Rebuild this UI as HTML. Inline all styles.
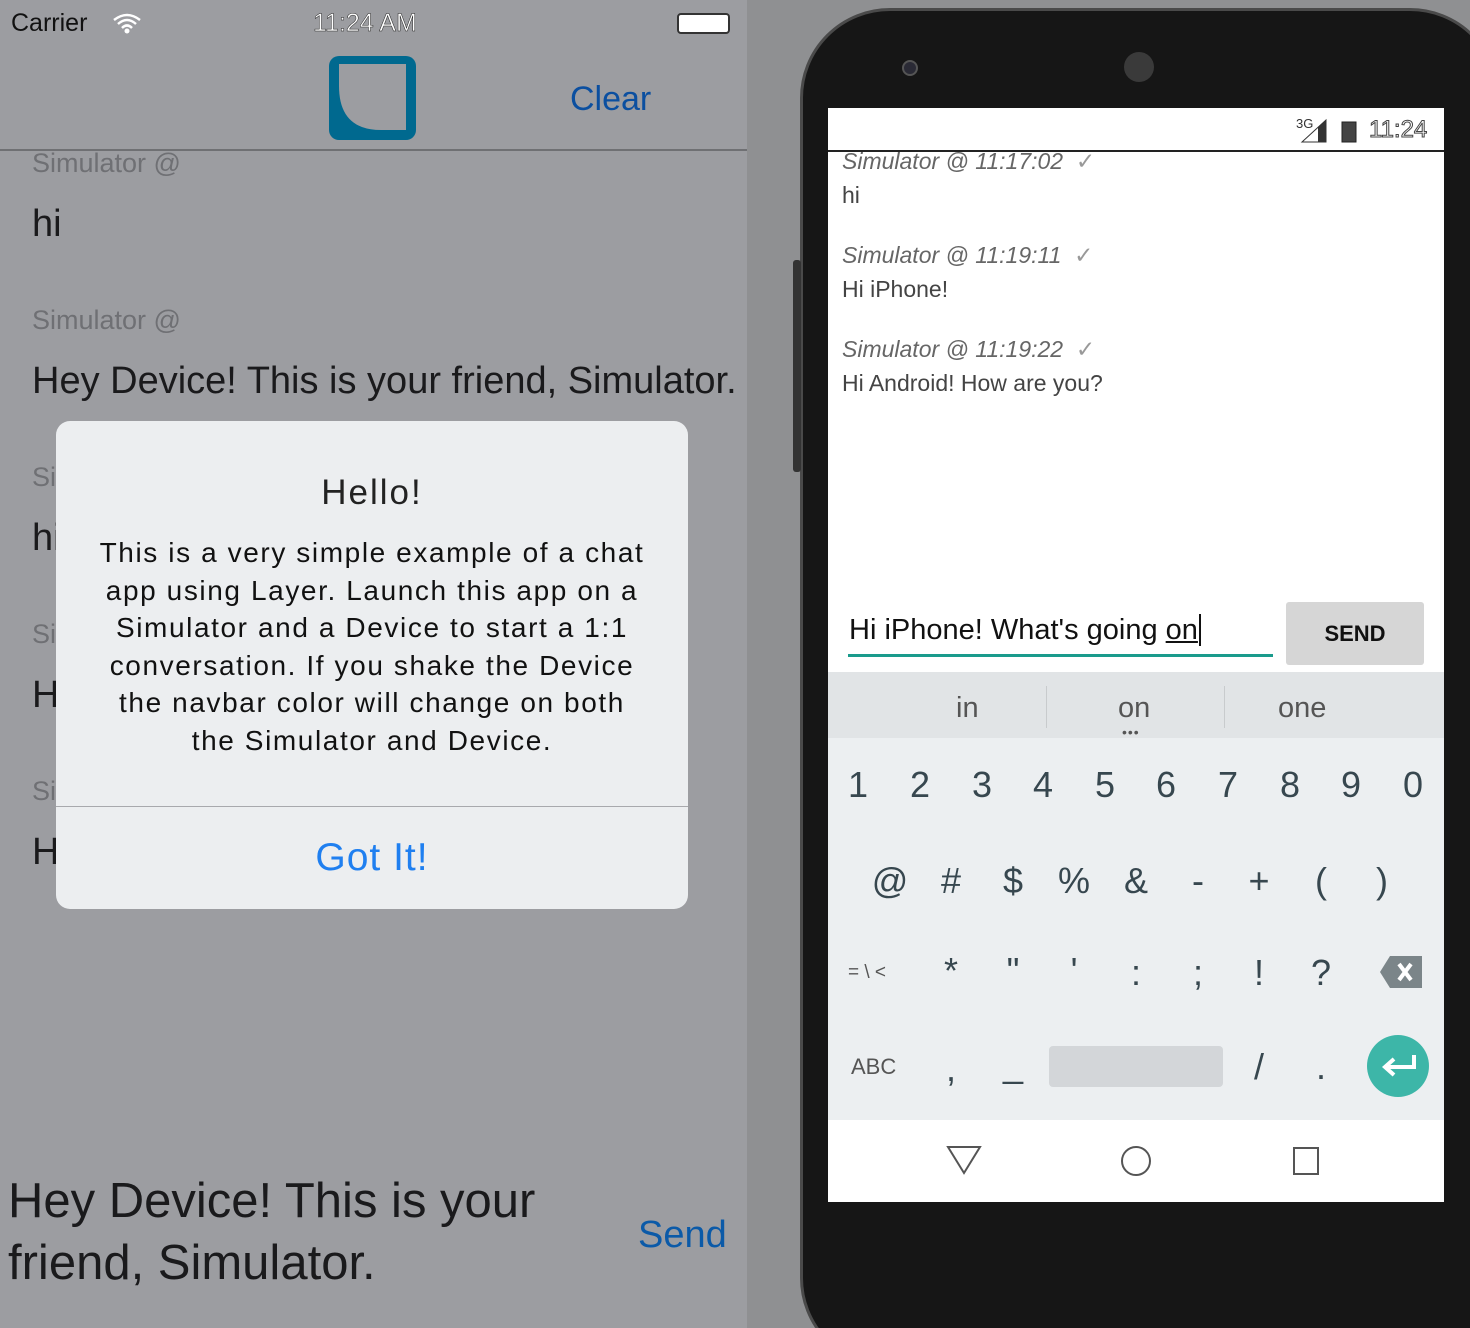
<!DOCTYPE html>
<html style="overflow:hidden;width:1470px;height:1328px"><head><meta charset="utf-8"><style>
*{margin:0;padding:0;box-sizing:border-box}
body{width:1470px;height:1328px;overflow:hidden;background:#8f9092;font-family:"Liberation Sans",sans-serif;position:relative}
.a{position:absolute;white-space:nowrap}
#left{position:absolute;left:0;top:0;width:747px;height:1328px;background:#9c9da1;overflow:hidden}
.g{color:#6f7074;font-size:27px}
.m{color:#1a1a1c;font-size:38px}
#dlg{position:absolute;left:56px;top:421px;width:632px;height:488px;background:#eceef0;border-radius:14px}
#phone{position:absolute;left:800px;top:8px;width:700px;height:1360px;background:#161616;border-radius:90px;border:3px solid #4a4a4a}
#scr{position:absolute;left:828px;top:108px;width:616px;height:1094px;background:#fff;overflow:hidden}
.k{position:absolute;font-size:36px;color:#37474f;text-align:center;width:60px}
</style></head><body>
<div id="left">
 <div class="a" style="left:11px;top:9px;font-size:25px;color:#111">Carrier</div>
 <svg class="a" style="left:112px;top:12px" width="30" height="22"><path d="M2 8 Q15 -2 28 8 M6 12 Q15 4 24 12 M10 16 Q15 11 20 16" stroke="#fff" stroke-width="2.5" fill="none"/><circle cx="15" cy="19" r="2.5" fill="#fff"/></svg>
 <div class="a" style="left:313px;top:9px;font-size:25px;color:#fff;-webkit-text-stroke:0.5px #222">11:24 AM</div>
 <div class="a" style="left:677px;top:13px;width:53px;height:21px;border:2px solid #333;border-radius:4px;background:#fff"></div>
 <svg class="a" style="left:329px;top:56px" width="87" height="84"><rect x="0" y="0" width="87" height="84" rx="10" fill="#00698f"/><path d="M10 8 H77 V74 H52 Q10 74 10 30 Z" fill="#9c9da1"/></svg>
 <div class="a" style="left:570px;top:80px;font-size:34px;color:#0b4fa0">Clear</div>
 <div class="a" style="left:0;top:149px;width:747px;height:2px;background:#6f7073"></div>
 <div class="a g" style="left:32px;top:148px">Simulator @</div>
 <div class="a m" style="left:32px;top:203px">hi</div>
 <div class="a g" style="left:32px;top:305px">Simulator @</div>
 <div class="a m" style="left:32px;top:360px">Hey Device! This is your friend, Simulator.</div>
 <div class="a g" style="left:32px;top:462px">Si</div>
 <div class="a m" style="left:32px;top:517px">hi</div>
 <div class="a g" style="left:32px;top:619px">Si</div>
 <div class="a m" style="left:32px;top:674px">H</div>
 <div class="a g" style="left:32px;top:776px">Si</div>
 <div class="a m" style="left:32px;top:831px">H</div>
 <div id="dlg">
  <div class="a" style="left:0;width:632px;text-align:center;top:52px;font-size:35px;color:#222;letter-spacing:2px">Hello!</div>
  <div class="a" style="left:0;width:632px;text-align:center;top:113px;font-size:28px;line-height:37.5px;color:#111;white-space:normal;letter-spacing:1.6px">This is a very simple example of a chat<br>app using Layer. Launch this app on a<br>Simulator and a Device to start a 1:1<br>conversation. If you shake the Device<br>the navbar color will change on both<br>the Simulator and Device.</div>
  <div class="a" style="left:0;top:385px;width:632px;height:1px;background:#a8a9ad"></div>
  <div class="a" style="left:0;width:632px;text-align:center;top:415px;font-size:39px;color:#1f7ff0;letter-spacing:1px">Got It!</div>
 </div>
 <div class="a" style="left:8px;top:1170px;font-size:49px;line-height:62px;color:#1a1a1c;white-space:normal">Hey Device! This is your<br>friend, Simulator.</div>
 <div class="a" style="left:638px;top:1214px;font-size:38px;color:#0b5aa8">Send</div>
</div>
<div id="phone"></div>
<div class="a" style="left:793px;top:260px;width:8px;height:212px;background:#333;border-radius:3px"></div>
<div class="a" style="left:902px;top:60px;width:16px;height:16px;border-radius:50%;background:#2a2a35;border:2px solid #555"></div>
<div class="a" style="left:1124px;top:52px;width:30px;height:30px;border-radius:50%;background:#3a3a3a"></div>
<div id="scr">
 <div class="a" style="left:0;top:42px;width:616px;height:2px;background:#222"></div>
 <div class="a" style="left:468px;top:8px;font-size:13px;color:#333">3G</div>
 <svg class="a" style="left:472px;top:10px" width="60" height="26"><path d="M2 24 L26 2 V24Z" fill="#fff" stroke="#333"/><path d="M18 9 L26 2 V24 H18Z" fill="#333"/><rect x="42" y="4" width="14" height="20" fill="#444" stroke="#222"/></svg>
 <div class="a" style="left:541px;top:8px;font-size:24px;color:#fff;-webkit-text-stroke:1px #444">11:24</div>
 <div class="a" style="left:14px;top:40px;font-size:23px;font-style:italic;color:#666">Simulator @ 11:17:02 &nbsp;<span style="color:#999;font-style:normal">✓</span></div>
 <div class="a" style="left:14px;top:74px;font-size:23px;color:#444">hi</div>
 <div class="a" style="left:14px;top:134px;font-size:23px;font-style:italic;color:#666">Simulator @ 11:19:11 &nbsp;<span style="color:#999;font-style:normal">✓</span></div>
 <div class="a" style="left:14px;top:168px;font-size:23px;color:#444">Hi iPhone!</div>
 <div class="a" style="left:14px;top:228px;font-size:23px;font-style:italic;color:#666">Simulator @ 11:19:22 &nbsp;<span style="color:#999;font-style:normal">✓</span></div>
 <div class="a" style="left:14px;top:262px;font-size:23px;color:#444">Hi Android! How are you?</div>
 <div class="a" style="left:21px;top:506px;font-size:29px;color:#111">Hi iPhone! What's going <u>on</u><span style="border-left:2px solid #111;margin-left:1px"></span></div>
 <div class="a" style="left:20px;top:546px;width:425px;height:3px;background:#1a9b8c"></div>
 <div class="a" style="left:458px;top:494px;width:138px;height:63px;background:#d6d6d6;border-radius:3px;font-size:22px;font-weight:bold;color:#111;text-align:center;line-height:63px">SEND</div>
 <div class="a" style="left:0;top:564px;width:616px;height:66px;background:#e1e4e6"></div>
 <div class="a" style="left:0;top:630px;width:616px;height:382px;background:#eceff1"></div>
 <div class="a" style="left:218px;top:578px;width:1px;height:42px;background:#c8cbcd"></div>
 <div class="a" style="left:396px;top:578px;width:1px;height:42px;background:#c8cbcd"></div>
 <div class="a" style="left:128px;top:584px;font-size:29px;color:#555">in</div>
 <div class="a" style="left:290px;top:584px;font-size:29px;color:#555">on</div>
 <div class="a" style="left:294px;top:616px;font-size:14px;color:#555;letter-spacing:1px">•••</div>
 <div class="a" style="left:450px;top:584px;font-size:29px;color:#555">one</div>
 <div class="k" style="left:0;top:656px">1</div><div class="k" style="left:62px;top:656px">2</div><div class="k" style="left:124px;top:656px">3</div><div class="k" style="left:185px;top:656px">4</div><div class="k" style="left:247px;top:656px">5</div><div class="k" style="left:308px;top:656px">6</div><div class="k" style="left:370px;top:656px">7</div><div class="k" style="left:432px;top:656px">8</div><div class="k" style="left:493px;top:656px">9</div><div class="k" style="left:555px;top:656px">0</div>
 <div class="k" style="left:32px;top:752px">@</div><div class="k" style="left:93px;top:752px">#</div><div class="k" style="left:155px;top:752px">$</div><div class="k" style="left:216px;top:752px">%</div><div class="k" style="left:278px;top:752px">&amp;</div><div class="k" style="left:340px;top:752px">-</div><div class="k" style="left:401px;top:752px">+</div><div class="k" style="left:463px;top:752px">(</div><div class="k" style="left:524px;top:752px">)</div>
 <div class="a" style="left:20px;top:854px;font-size:19px;color:#555">= \ &lt;</div>
 <div class="k" style="left:93px;top:842px">*</div><div class="k" style="left:155px;top:842px">"</div><div class="k" style="left:216px;top:842px">'</div><div class="k" style="left:278px;top:844px">:</div><div class="k" style="left:340px;top:844px">;</div><div class="k" style="left:401px;top:844px">!</div><div class="k" style="left:463px;top:844px">?</div>
 <svg class="a" style="left:552px;top:848px" width="42" height="32"><path d="M10 0 H42 V32 H10 L0 16Z" fill="#7b8589"/><path d="M19 8 L31 24 M31 8 L19 24" stroke="#fff" stroke-width="4"/></svg>
 <div class="a" style="left:23px;top:946px;font-size:22px;color:#555">ABC</div>
 <div class="k" style="left:93px;top:940px">,</div><div class="k" style="left:155px;top:936px">_</div>
 <div class="a" style="left:221px;top:938px;width:174px;height:41px;background:#d3d6d9;border-radius:4px"></div>
 <div class="k" style="left:401px;top:938px">/</div><div class="k" style="left:463px;top:938px">.</div>
 <div class="a" style="left:539px;top:927px;width:62px;height:62px;border-radius:50%;background:#3db6a8"></div>
 <svg class="a" style="left:552px;top:945px" width="38" height="26"><path d="M34 2 V14 H6 M14 6 L5 14 L14 22" stroke="#fff" stroke-width="4" fill="none"/></svg>
 <svg class="a" style="left:117px;top:1036px" width="40" height="32"><path d="M3 3 H35 L19 29Z" fill="none" stroke="#555" stroke-width="2"/></svg>
 <div class="a" style="left:293px;top:1038px;width:30px;height:30px;border-radius:50%;border:2px solid #555"></div>
 <div class="a" style="left:465px;top:1039px;width:26px;height:28px;border:2px solid #555"></div>
</div>
</body></html>
